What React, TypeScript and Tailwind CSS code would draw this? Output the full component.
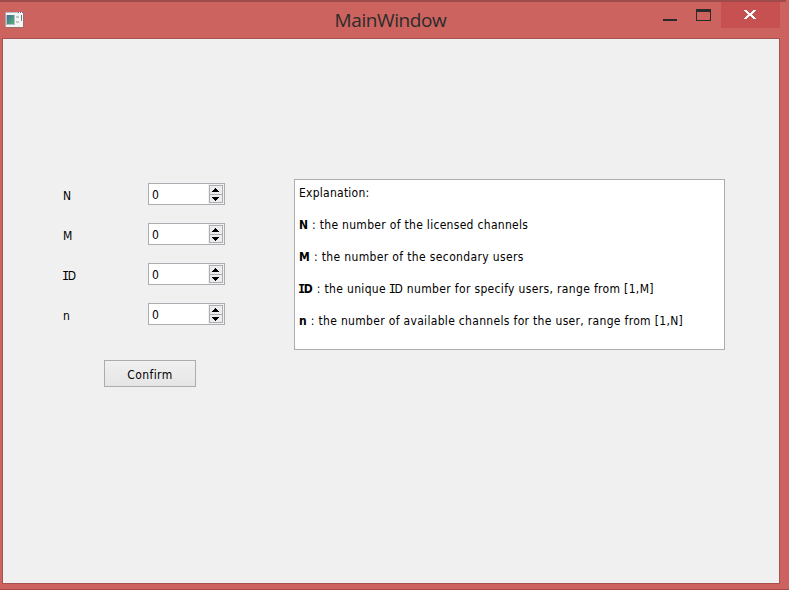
const fields = ["N", "M", "ID", "n"];

function AppIcon() {
  return (
    <svg width="20" height="17" viewBox="0 0 20 17" shapeRendering="crispEdges">
      <rect x="1" y="1" width="18" height="15" fill="#9b6d6b" />
      <rect x="0" y="0" width="1" height="15" fill="#c39a98" />
      <rect x="1" y="0" width="17" height="15" fill="#f5f5f5" />
      <rect x="1" y="0" width="12" height="1" fill="#b9bfca" />
      <rect x="13" y="0" width="1" height="1" fill="#52679a" />
      <rect x="15" y="0" width="1" height="1" fill="#52679a" />
      <rect x="17" y="0" width="1" height="1" fill="#52679a" />
      <defs>
        <linearGradient id="pane" x1="0" y1="0" x2="1" y2="1">
          <stop offset="0" stopColor="#40709a" />
          <stop offset="1" stopColor="#55b070" />
        </linearGradient>
      </defs>
      <rect x="1" y="3" width="9" height="10" fill="#b5bccb" />
      <rect x="2" y="3" width="7" height="9" fill="url(#pane)" />
      <rect x="11" y="4" width="3" height="2" fill="#c5c7c5" />
      <rect x="11" y="9" width="3" height="2" fill="#c5c7c5" />
      <rect x="16" y="3" width="1" height="6" fill="url(#pane)" />
    </svg>
  );
}

function TitleBar() {
  return (
    <header className="flex h-9 w-[787px] items-start">
      <div className="w-[220px] pt-[10px] pl-[5px]">
        <AppIcon />
      </div>
      <h1 className="w-[341px] pt-[4px] text-center font-['Open_Sans',sans-serif] text-[19px] leading-7 tracking-[-0.4px] text-[#2b2b2b]">
        MainWindow
      </h1>
      <div className="flex flex-1 justify-end pr-[7px]">
        <div className="flex h-[26px] w-[58px]">
          <svg width="58" height="26" shapeRendering="crispEdges">
            <rect x="0" y="17" width="14" height="2" fill="#2b2b2b" />
            <path d="M33 7h15v12H33z M34 10v8h13v-8z" fill="#2b2b2b" fillRule="evenodd" />
          </svg>
        </div>
        <button className="flex h-[26px] w-[59px] bg-[#c75050] pt-[8px] pl-[23px]">
          <svg width="12" height="9" viewBox="0 0 12 9" fill="#fff" shapeRendering="crispEdges">
            <path d="M0 0h3v1h1v1h1v1h2v-1h1v-1h1v-1h3v1h-1v1h-1v1h-1v1h-1v1h1v1h1v1h1v1h1v1h-3v-1h-1v-1h-1v-1h-2v1h-1v1h-1v1H0v-1h1v-1h1v-1h1v-1h1v-1h-1v-1h-1v-1h-1v-1H0z" />
          </svg>
        </button>
      </div>
    </header>
  );
}

// "ID" set with a serifed capital I
function SerifID() {
  return (
    <>
      <span className="-ml-px font-['DejaVu_Sans_Mono',monospace] tracking-[-1.6px]">I</span>D
    </>
  );
}

function SpinBox() {
  return (
    <div className="flex h-[22px] w-[77px] justify-between border border-[#abadb3] bg-white pl-[3px]">
      <span className="leading-[23px]">0</span>
      <div className="flex w-4 items-start bg-[#f0f0f0] pt-px pl-px">
        <div className="flex h-[18px] w-[14px] flex-col border border-[#abadb3] bg-[#ececec]">
          <svg width="12" height="16" shapeRendering="crispEdges">
            <rect x="0" y="8" width="12" height="1" fill="#abadb3" />
            <path d="M5 2h1v1h1v1h1v1h1v1H2v-1h1v-1h1v-1h1z" fill="#000" />
            <path d="M2 11h7v1h-1v1h-1v1h-1v1H5v-1h-1v-1h-1v-1h-1z" fill="#000" />
          </svg>
        </div>
      </div>
    </div>
  );
}

export default function App() {
  return (
    <div className="h-[590px] w-[789px] overflow-hidden border-b border-[#a54c4c] bg-[#cd635f] font-['DejaVu_Sans_Condensed','DejaVu_Sans',sans-serif] text-[12px] text-black">
      <div className="h-[2px] w-[786px] bg-[#a04b4b]" />
      <TitleBar />
      <main className="ml-[2px] flex h-[546px] w-[778px] items-start border border-[#a85152] bg-[#f0f0f0]">
        <section className="w-[291px] pt-[144px] pl-[60px]">
          {fields.map((name) => (
            <div key={name} className="flex h-10 items-start">
              <label className="w-[85px] leading-[27px]">{name === "ID" ? <SerifID /> : name}</label>
              <SpinBox />
            </div>
          ))}
          <button className="mt-[17px] ml-[41px] h-[27px] w-[92px] border border-[#acacac] bg-linear-to-b from-[#f0f0f0] to-[#e5e5e5] pt-px leading-[26px] tracking-[0.4px]">
            Confirm
          </button>
        </section>
        <section className="mt-[140px] flex h-[171px] w-[431px] flex-col gap-4 border border-[#abadb3] bg-white pt-[5px] pl-1 leading-4 whitespace-nowrap">
          <p className="tracking-[0.25px]">Explanation:</p>
          <p className="tracking-[0.3px]"><b>N</b> : the number of the licensed channels</p>
          <p className="tracking-[0.36px]"><b>M</b> : the number of the secondary users</p>
          <p className="tracking-[0.34px]"><b><SerifID /></b> : the unique <SerifID /> number for specify users, range from [1,M]</p>
          <p className="tracking-[0.32px]"><b>n</b> : the number of available channels for the user, range from [1,N]</p>
        </section>
      </main>
    </div>
  );
}
